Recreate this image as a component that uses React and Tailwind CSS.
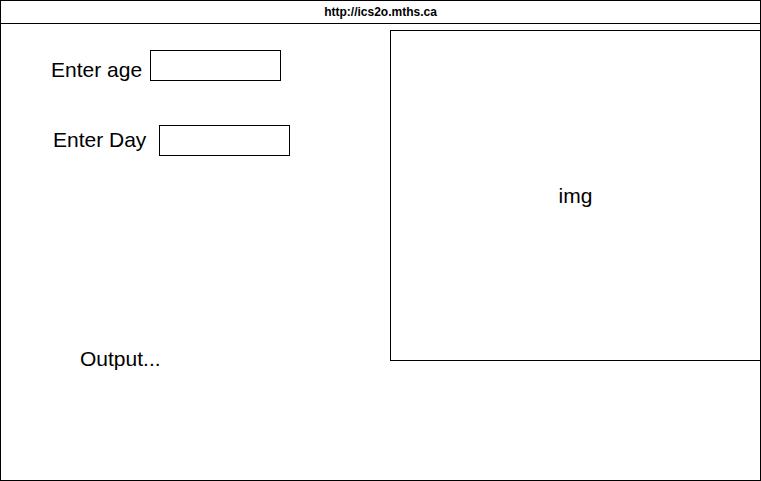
export default function App() {
  return (
    <div className="w-[761px] h-[481px] bg-white border border-black flex flex-col font-['Liberation_Sans',Arial,sans-serif] text-black">
      <div className="h-[23px] shrink-0 border-b border-black flex items-center justify-center">
        <span className="text-[12px] font-bold leading-[14px]">http://ics2o.mths.ca</span>
      </div>
      <div className="flex-1 flex">
        <div className="w-[389px] shrink-0 flex flex-col pt-[26px]">
          <div className="flex items-start pl-[50px] h-[31px]">
            <div className="w-[99px] mt-[8px] text-[21px] leading-[24px]">Enter age</div>
            <div className="w-[131px] h-[31px] border border-black" />
          </div>
          <div className="flex items-start pl-[52px] mt-[44px] h-[31px]">
            <div className="w-[106px] mt-[3px] text-[21px] leading-[24px]">Enter Day</div>
            <div className="w-[131px] h-[31px] border border-black" />
          </div>
          <div className="pl-[79px] mt-[191px] text-[21px] leading-[24px]">Output...</div>
        </div>
        <div className="flex-1 pt-[6px]">
          <div className="h-[331px] border-t border-l border-b border-black flex items-center justify-center">
            <span className="text-[21px] leading-[24px]">img</span>
          </div>
        </div>
      </div>
    </div>
  );
}
